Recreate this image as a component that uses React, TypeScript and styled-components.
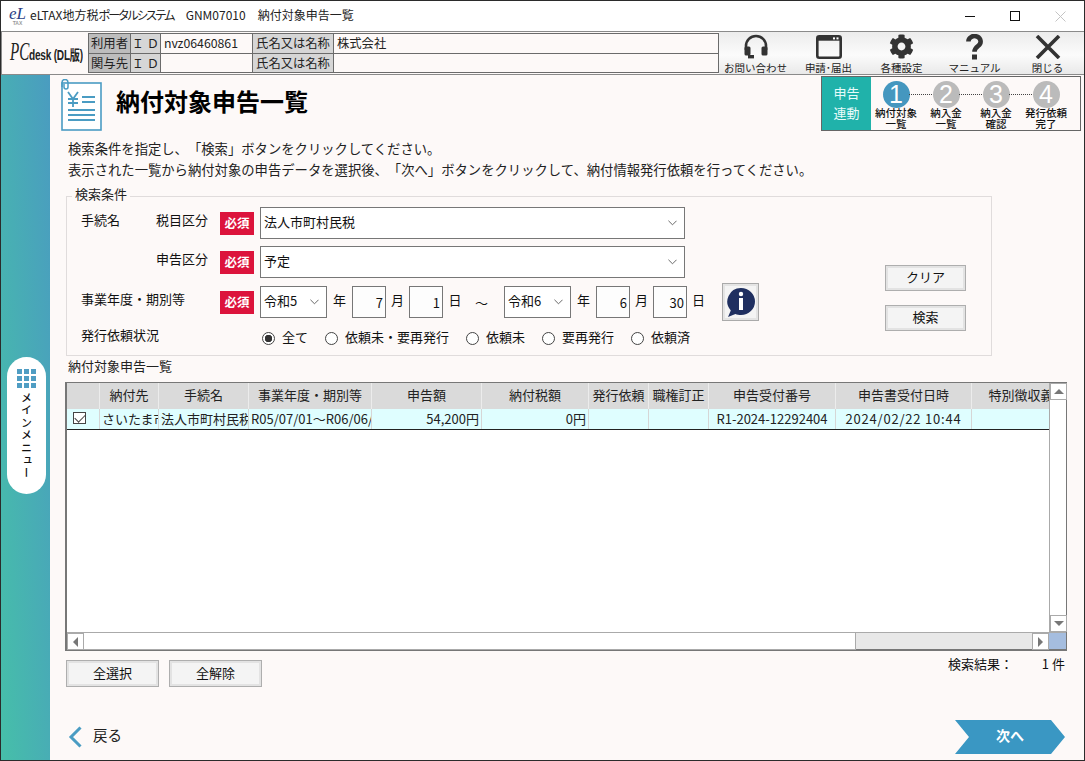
import React from 'react';
import styled, { createGlobalStyle } from 'styled-components';
import { FaCog } from 'react-icons/fa';

const columns = [
  { title: '', value: '', width: 33 },
  { title: '納付先', value: 'さいたま市', width: 59 },
  { title: '手続名', value: '法人市町村民税', width: 90 },
  { title: '事業年度・期別等', value: 'R05/07/01～R06/06/30', width: 123 },
  { title: '申告額', value: '54,200円', width: 110, align: 'right' },
  { title: '納付税額', value: '0円', width: 107, align: 'right' },
  { title: '発行依頼', value: '', width: 60 },
  { title: '職権訂正', value: '', width: 60 },
  { title: '申告受付番号', value: 'R1-2024-12292404', width: 127, align: 'center' },
  { title: '申告書受付日時', value: '2024/02/22 10:44', width: 136, align: 'center', wide: true },
  { title: '特別徴収義務者', value: '', width: 125 }
];

const steps = [
  { no: 1, lines: ['納付対象', '一覧'] },
  { no: 2, lines: ['納入金', '一覧'] },
  { no: 3, lines: ['納入金', '確認'] },
  { no: 4, lines: ['発行依頼', '完了'] }
];

const radios = ['全て', '依頼未・要再発行', '依頼未', '要再発行', '依頼済'];

const HeadsetIcon = () => (
  <svg width="26" height="25" viewBox="0 0 26 25">
    <path d="M3 16V12a10 10 0 0 1 20 0v4" fill="none" stroke="#333" strokeWidth="2.6" />
    <rect x="1.5" y="12.5" width="6" height="9" rx="1.5" fill="#333" />
    <rect x="18.5" y="12.5" width="6" height="9" rx="1.5" fill="#333" />
    <rect x="5" y="21" width="6" height="3.4" fill="#333" />
  </svg>
);

const WindowIcon = () => (
  <svg width="26" height="24" viewBox="0 0 26 24">
    <rect x="1.3" y="1.3" width="23.4" height="21.4" rx="2" fill="none" stroke="#333" strokeWidth="2.6" />
    <rect x="1.3" y="1.3" width="23.4" height="4.4" fill="#333" />
    <rect x="17" y="2.4" width="2" height="2" fill="#fff" />
    <rect x="20.5" y="2.4" width="2" height="2" fill="#fff" />
  </svg>
);

const HelpIcon = () => (
  <svg width="17" height="26" viewBox="0 0 17 26">
    <path d="M2.400 7.500a6.100 5.400 0 1 1 9.800 4.300c-2.500 1.800-3.700 2.800-3.700 6" fill="none" stroke="#333" strokeWidth="4.600" />
    <rect x="6" y="20.500" width="5" height="5" fill="#333" />
  </svg>
);

const CloseIcon = () => (
  <svg width="26" height="24" viewBox="0 0 26 24">
    <path d="M2 1l22 22M24 1L2 23" fill="none" stroke="#333" strokeWidth="3.6" />
  </svg>
);

const DocIcon = () => (
  <svg width="44" height="52" viewBox="0 0 44 52">
    <rect x="3" y="4" width="39" height="47" fill="#fff" stroke="#4a9cc3" strokeWidth="1.6" />
    <path d="M3 8V3.500a3 3 0 0 1 6 0V8a2 2 0 0 1-4 0V5" fill="none" stroke="#4a9cc3" strokeWidth="1.5" />
    <path d="M9 13l5 7 5-7M14 20v8M9 20h10M9 24h10" fill="none" stroke="#4a9cc3" strokeWidth="1.8" />
    <path d="M23 18h13M23 23h13M9 31h27M9 36h27M9 41h27" fill="none" stroke="#4a9cc3" strokeWidth="1.8" />
  </svg>
);

const InfoIcon = () => (
  <svg width="30" height="30" viewBox="0 0 30 30">
    <path d="M15 1a14 13.500 0 0 1 0 27c-2 0-4-.4-5.600-1.100L2 30l2.800-6.500A13.500 13.500 0 0 1 15 1z" fill="#1f2f60" />
    <circle cx="15" cy="7" r="2.200" fill="#fff" />
    <rect x="13" y="11" width="4" height="12" fill="#fff" />
  </svg>
);

const Chevron = () => (
  <svg width="9" height="6" viewBox="0 0 10 6">
    <path d="M.5.500L5 5 9.500.500" fill="none" stroke="#666" strokeWidth="1.100" />
  </svg>
);

const Required = () => <RequiredBadge>必須</RequiredBadge>;

const App: React.FC = () => {
  return (
    <Page>
      <GlobalStyle />
      <TitleBar>
        <TitleLogo>
          <LogoMark>eL</LogoMark>
          <LogoSub>TAX</LogoSub>
        </TitleLogo>
        <TitleText>eLTAX地方税<TitleKana>ポータルシステム</TitleKana></TitleText>
        <TitleText>GNM07010</TitleText>
        <TitleText>納付対象申告一覧</TitleText>
        <WindowControls>
          <MinButton />
          <MaxButton />
          <svg width="11" height="11" viewBox="0 0 11 11">
            <path d="M.5.500l10 10M10.500.500l-10 10" stroke="#c4c4c4" strokeWidth="1" />
          </svg>
        </WindowControls>
      </TitleBar>

      <HeaderBar>
        <ProductLogo>
          <ProductPc>PC</ProductPc>
          <ProductName>desk (DL版)</ProductName>
        </ProductLogo>
        <UserTable>
          <DarkCell>利用者</DarkCell>
          <LabelCell>Ｉ Ｄ</LabelCell>
          <ValueCell>nvz06460861</ValueCell>
          <LabelCell>氏名又は名称</LabelCell>
          <ValueCell>株式会社</ValueCell>
          <DarkCell>関与先</DarkCell>
          <LabelCell>Ｉ Ｄ</LabelCell>
          <ValueCell />
          <LabelCell>氏名又は名称</LabelCell>
          <ValueCell />
        </UserTable>
        <Toolbar>
          <ToolButton><ToolIcon><HeadsetIcon /></ToolIcon><ToolLabel>お問い合わせ</ToolLabel></ToolButton>
          <ToolButton><ToolIcon><WindowIcon /></ToolIcon><ToolLabel>申請･届出</ToolLabel></ToolButton>
          <ToolButton><ToolIcon><FaCog size={25} color="#333" /></ToolIcon><ToolLabel>各種設定</ToolLabel></ToolButton>
          <ToolButton><ToolIcon><HelpIcon /></ToolIcon><ToolLabel>マニュアル</ToolLabel></ToolButton>
          <ToolButton><ToolIcon><CloseIcon /></ToolIcon><ToolLabel>閉じる</ToolLabel></ToolButton>
        </Toolbar>
      </HeaderBar>

      <Body>
        <Sidebar>
          <MenuPill>
            <MenuGrid>
              {Array.from({ length: 9 }).map((_, i) => <MenuDot key={i} />)}
            </MenuGrid>
            <MenuText>メインメニュー</MenuText>
          </MenuPill>
        </Sidebar>

        <Main>
          <TitleRow>
            <DocIcon />
            <PageTitle>納付対象申告一覧</PageTitle>
            <Stepper>
              <StepperMode>申告<br />連動</StepperMode>
              {steps.map((step) => (
                <Step key={step.no} $last={step.no === 4}>
                  <StepCircle $active={step.no === 1}>{step.no}</StepCircle>
                  <StepLabel>{step.lines[0]}<br />{step.lines[1]}</StepLabel>
                </Step>
              ))}
            </Stepper>
          </TitleRow>

          <Instructions>
            <div>検索条件を指定し、「検索」ボタンをクリックしてください。</div>
            <div>表示された一覧から納付対象の申告データを選択後、「次へ」ボタンをクリックして、納付情報発行依頼を行ってください。</div>
          </Instructions>

          <SearchPanel>
            <Legend>検索条件</Legend>
            <SearchFields>
              <FieldRow>
                <GroupLabel>手続名</GroupLabel>
                <SubLabel>税目区分</SubLabel>
                <Required />
                <SelectBox $width={425}><SelectText>法人市町村民税</SelectText><Chevron /></SelectBox>
              </FieldRow>
              <FieldRow>
                <GroupLabel />
                <SubLabel>申告区分</SubLabel>
                <Required />
                <SelectBox $width={425}><SelectText>予定</SelectText><Chevron /></SelectBox>
              </FieldRow>
              <DateRow>
                <WideLabel>事業年度・期別等</WideLabel>
                <Required />
                <SelectBox $width={67}><SelectText>令和5</SelectText><Chevron /></SelectBox>
                <Unit $width={25}>年</Unit>
                <NumberBox>7</NumberBox>
                <Unit $width={23}>月</Unit>
                <NumberBox>1</NumberBox>
                <Unit $width={24}>日</Unit>
                <Tilde>～</Tilde>
                <SelectBox $width={67}><SelectText>令和6</SelectText><Chevron /></SelectBox>
                <Unit $width={25}>年</Unit>
                <NumberBox>6</NumberBox>
                <Unit $width={23}>月</Unit>
                <NumberBox>30</NumberBox>
                <Unit $width={23}>日</Unit>
                <InfoButton><InfoIcon /></InfoButton>
              </DateRow>
              <RadioRow>
                <RadioTitle>発行依頼状況</RadioTitle>
                {radios.map((radio, i) => (
                  <RadioItem key={radio}>
                    <RadioMark $checked={i === 0} />
                    <RadioText>{radio}</RadioText>
                  </RadioItem>
                ))}
              </RadioRow>
            </SearchFields>
            <SearchActions>
              <ActionButton $width={81} $height={26}>クリア</ActionButton>
              <ActionButton $width={81} $height={26}>検索</ActionButton>
            </SearchActions>
          </SearchPanel>

          <SectionLabel>納付対象申告一覧</SectionLabel>

          <GridFrame>
            <GridTop>
              <GridBody>
                <GridHeader>
                  {columns.map((col, i) => (
                    <HeaderCell key={i} $width={col.width}>{col.title}</HeaderCell>
                  ))}
                </GridHeader>
                <GridRow>
                  {columns.map((col, i) => (
                    <DataCell key={i} $width={col.width} $align={col.align} $wide={col.wide}>
                      {i === 0 ? <CheckMark /> : col.value}
                    </DataCell>
                  ))}
                </GridRow>
              </GridBody>
              <VScroll>
                <ScrollButton><ArrowUp /></ScrollButton>
                <VThumb />
                <ScrollButton><ArrowDown /></ScrollButton>
              </VScroll>
            </GridTop>
            <HScroll>
              <ScrollButton><ArrowLeft /></ScrollButton>
              <HThumb />
              <HTrack />
              <ScrollButton><ArrowRight /></ScrollButton>
              <ScrollCorner />
            </HScroll>
          </GridFrame>

          <BelowGrid>
            <ActionButton $width={93} $height={27}>全選択</ActionButton>
            <ActionButton $width={93} $height={27}>全解除</ActionButton>
            <ResultCount>
              <span>検索結果：</span>
              <span>1 件</span>
            </ResultCount>
          </BelowGrid>

          <Footer>
            <BackLink>
              <svg width="14" height="22" viewBox="0 0 14 22">
                <path d="M12.500 1.500L3 11l9.500 9.500" fill="none" stroke="#4a9cc3" strokeWidth="3" />
              </svg>
              <BackText>戻る</BackText>
            </BackLink>
            <NextButton>次へ</NextButton>
          </Footer>
        </Main>
      </Body>
    </Page>
  );
};

export default App;

const GlobalStyle = createGlobalStyle`
  * {
    box-sizing: border-box;
  }
  body {
    margin: 0;
    font-family: "Noto Sans CJK JP", "Liberation Sans", sans-serif;
    font-size: 13px;
    color: #111;
    text-spacing-trim: space-all;
  }
`;

const Page = styled.div`
  width: 1085px;
  height: 761px;
  border: 1px solid #2b2b2b;
  background: #fff;
  overflow: hidden;
  display: flex;
  flex-direction: column;
`;

const TitleBar = styled.div`
  height: 30px;
  display: flex;
  align-items: center;
  padding-left: 8px;
  font-size: 12px;
  flex-shrink: 0;
`;

const TitleLogo = styled.div`
  width: 21px;
  padding-right: 4px;
  display: flex;
  flex-direction: column;
  align-items: center;
  line-height: 1;
`;

const LogoMark = styled.span`
  font-family: "Liberation Serif", serif;
  font-style: italic;
  font-size: 17px;
  line-height: 14px;
  color: #2c3f86;
`;

const LogoSub = styled.span`
  font-family: "Liberation Sans", sans-serif;
  font-size: 5px;
  font-weight: bold;
  color: #999;
`;

const TitleText = styled.span`
  margin: 0 12px 4px 0;
  color: #222;
  font-feature-settings: "palt";
`;

const TitleKana = styled.span`
  letter-spacing: -1.7px;
`;

const WindowControls = styled.div`
  margin-left: auto;
  width: 101px;
  margin-right: 18px;
  display: flex;
  align-items: center;
  justify-content: space-between;
`;

const MinButton = styled.div`
  width: 10px;
  height: 1px;
  background: #111;
`;

const MaxButton = styled.div`
  width: 10px;
  height: 10px;
  border: 1px solid #111;
`;

const HeaderBar = styled.div`
  height: 44px;
  flex-shrink: 0;
  display: flex;
  border-top: 1px solid #8a8a8a;
  border-bottom: 1px solid #8a8a8a;
  border-left: 1px solid #8a8a8a;
  background: #fdf9f8;
`;

const ProductLogo = styled.div`
  width: 86px;
  display: flex;
  align-items: baseline;
  padding: 6px 0 0 8px;
  color: #222;
`;

const ProductPc = styled.span`
  display: inline-block;
  width: 19px;
  font-family: "Liberation Serif", serif;
  font-style: italic;
  font-size: 26px;
  line-height: 28px;
  transform: scaleX(0.58);
  transform-origin: left;
`;

const ProductName = styled.span`
  display: inline-block;
  font-family: "Liberation Sans", "Noto Sans CJK JP", sans-serif;
  font-size: 14px;
  font-weight: bold;
  letter-spacing: -0.3px;
  white-space: nowrap;
  transform: scaleX(0.72);
  transform-origin: left;
`;

const UserTable = styled.div`
  width: 631px;
  height: 40px;
  margin-top: 1px;
  display: grid;
  grid-template-columns: 41px 29px 91px 80px 1fr;
  grid-template-rows: 19px 18px;
  gap: 1px;
  padding: 1px 0 1px 1px;
  background: #6b6b6b;
  border-right: 1px solid #6b6b6b;
`;

const BaseCell = styled.div`
  font-size: 12.3px;
  line-height: 18px;
  white-space: nowrap;
  overflow: hidden;
  color: #222;
`;

const DarkCell = styled(BaseCell)`
  background: #bdbdbd;
  text-align: center;
`;

const LabelCell = styled(BaseCell)`
  background: #d6d6d6;
  text-align: center;
`;

const ValueCell = styled(BaseCell)`
  background: #fdf9f8;
  padding-left: 3px;
`;

const Toolbar = styled.div`
  flex: 1;
  display: flex;
  background: linear-gradient(#ececec, #fbfbfb 55%, #e9e9e9);
`;

const ToolButton = styled.div`
  width: 73px;
  display: flex;
  flex-direction: column;
  align-items: center;
`;

const ToolIcon = styled.div`
  height: 29px;
  display: flex;
  align-items: center;
  justify-content: center;
`;

const ToolLabel = styled.span`
  font-size: 10.5px;
  line-height: 13px;
  white-space: nowrap;
  color: #222;
`;

const Body = styled.div`
  flex: 1;
  min-height: 0;
  display: flex;
`;

const Sidebar = styled.div`
  width: 49px;
  flex-shrink: 0;
  background: linear-gradient(to bottom left, #4a9cc0, #46bfa9);
  padding: 282px 0 0 6px;
`;

const MenuPill = styled.div`
  width: 39px;
  height: 137px;
  border-radius: 20px;
  background: #fff;
  display: flex;
  flex-direction: column;
  align-items: center;
  padding-top: 12px;
`;

const MenuGrid = styled.div`
  display: grid;
  grid-template-columns: repeat(3, 5px);
  grid-auto-rows: 5px;
  gap: 2px;
`;

const MenuDot = styled.span`
  background: #4f9dc3;
`;

const MenuText = styled.div`
  writing-mode: vertical-rl;
  font-size: 11px;
  font-weight: 500;
  letter-spacing: 1.6px;
  margin-top: 4px;
  color: #111;
`;

const Main = styled.div`
  flex: 1;
  min-width: 0;
  background: #fdf9f8;
  padding: 0 17px 0 16px;
  display: flex;
  flex-direction: column;
`;

const TitleRow = styled.div`
  height: 63px;
  flex-shrink: 0;
  display: flex;
  align-items: flex-start;
  margin: 0 -14px 0 -7px;
  padding-top: 1px;
  svg {
    margin-top: 3px;
  }
`;

const PageTitle = styled.h1`
  margin: 8px 0 0 13px;
  font-size: 24px;
  line-height: 34px;
  font-weight: 700;
  color: #000;
`;

const Stepper = styled.div`
  margin-left: auto;
  width: 260px;
  height: 55px;
  border: 1px solid #666;
  display: flex;
  background: #fdf9f8;
`;

const StepperMode = styled.div`
  width: 49px;
  background: #20b2aa;
  color: #e8fbfa;
  font-size: 13px;
  line-height: 20px;
  text-align: center;
  padding-top: 6px;
`;

const Step = styled.div<{ $last?: boolean }>`
  width: 50px;
  position: relative;
  display: flex;
  flex-direction: column;
  align-items: center;
  padding-top: 4px;
  &::after {
    content: '';
    display: ${(p) => (p.$last ? 'none' : 'block')};
    position: absolute;
    top: 17px;
    left: 38px;
    width: 25px;
    border-top: 1px dotted #444;
  }
`;

const StepCircle = styled.div<{ $active?: boolean }>`
  width: 27px;
  height: 27px;
  border-radius: 50%;
  background: ${(p) => (p.$active ? '#4597bf' : '#bbbbbb')};
  color: #fff;
  font-family: "Liberation Sans", sans-serif;
  font-size: 25px;
  line-height: 27px;
  text-align: center;
`;

const StepLabel = styled.div`
  font-size: 10.5px;
  line-height: 11px;
  font-weight: 500;
  text-align: center;
  white-space: nowrap;
  margin-top: -1px;
`;

const Instructions = styled.div`
  height: 44px;
  flex-shrink: 0;
  padding-left: 2px;
  line-height: 21px;
  font-size: 13.33px;
  white-space: nowrap;
  color: #222;
`;

const SearchPanel = styled.div`
  position: relative;
  width: 926px;
  height: 160px;
  flex-shrink: 0;
  margin-top: 14px;
  border: 1px solid #e0dcdc;
  padding: 10px 25px 0 14px;
  display: flex;
`;

const Legend = styled.span`
  position: absolute;
  top: -11px;
  left: 5px;
  padding: 0 3px;
  background: #fdf9f8;
  font-size: 13px;
  line-height: 16px;
  color: #222;
`;

const SearchFields = styled.div`
  display: flex;
  flex-direction: column;
  flex: 1;
`;

const FieldRow = styled.div`
  height: 32px;
  margin-bottom: 7px;
  display: flex;
  align-items: center;
  white-space: nowrap;
`;

const DateRow = styled(FieldRow)`
  margin: 1px 0 0;
`;

const GroupLabel = styled.span`
  width: 75px;
  margin-bottom: 7px;
`;

const SubLabel = styled.span`
  width: 64px;
  margin-bottom: 7px;
`;

const WideLabel = styled.span`
  width: 139px;
  margin-bottom: 7px;
`;

const RequiredBadge = styled.span`
  width: 34px;
  height: 23px;
  margin-right: 6px;
  background: #dc143c;
  color: #fff;
  font-size: 12.5px;
  font-weight: 700;
  line-height: 21px;
  text-align: center;
  flex-shrink: 0;
`;

const SelectBox = styled.div<{ $width: number }>`
  width: ${(p) => p.$width}px;
  height: 32px;
  background: #fff;
  border: 1px solid #777;
  padding: 0 7px 0 3px;
  display: flex;
  align-items: center;
  justify-content: space-between;
  font-size: 13px;
`;

const SelectText = styled.span`
  margin-bottom: 4px;
`;

const Unit = styled.span<{ $width: number }>`
  width: ${(p) => p.$width}px;
  margin-bottom: 6px;
  text-align: center;
  font-size: 13px;
`;

const NumberBox = styled.div`
  width: 34px;
  height: 32px;
  background: #fdfdfd;
  border: 1px solid #777;
  padding-right: 2px;
  text-align: right;
  line-height: 31px;
  font-size: 13px;
`;

const Tilde = styled.span`
  width: 37px;
  padding-right: 8px;
  text-align: center;
`;

const InfoButton = styled.div`
  width: 37px;
  height: 38px;
  margin-left: 12px;
  border: 1px solid #aaa;
  box-shadow: inset 0 0 0 2px #e4e4e4;
  background: #f4f4f4;
  display: flex;
  align-items: center;
  justify-content: center;
`;

const RadioRow = styled.div`
  display: flex;
  align-items: center;
  margin-top: 10px;
  height: 20px;
  white-space: nowrap;
`;

const RadioTitle = styled.span`
  width: 181px;
  margin-bottom: 7px;
`;

const RadioItem = styled.label`
  display: flex;
  align-items: center;
  gap: 7px;
  margin-right: 17px;
`;

const RadioText = styled.span`
  margin-bottom: 4px;
`;

const RadioMark = styled.span<{ $checked?: boolean }>`
  width: 13px;
  height: 13px;
  border-radius: 50%;
  border: 1px solid #444;
  background: ${(p) => (p.$checked ? 'radial-gradient(circle, #333 0 3.500px, #fff 4px)' : '#fff')};
`;

const SearchActions = styled.div`
  display: flex;
  flex-direction: column;
  gap: 14px;
  padding-top: 58px;
`;

const ActionButton = styled.div<{ $width: number; $height: number }>`
  width: ${(p) => p.$width}px;
  height: ${(p) => p.$height}px;
  border: 1px solid #aeaeae;
  box-shadow: inset 0 0 0 2px #e3e3e3;
  background: #f4f4f4;
  text-align: center;
  line-height: ${(p) => p.$height - 4}px;
  font-size: 13px;
  color: #111;
`;

const SectionLabel = styled.div`
  margin: 2px 0 0 2px;
  height: 16px;
  line-height: 16px;
  flex-shrink: 0;
  color: #222;
`;

const GridFrame = styled.div`
  width: 1002px;
  height: 269px;
  margin: 8px 0 0 -1px;
  flex-shrink: 0;
  border: solid #777;
  border-width: 1px 1px 2px 2px;
  background: #fff;
  display: flex;
  flex-direction: column;
`;

const GridTop = styled.div`
  flex: 1;
  min-height: 0;
  display: flex;
`;

const GridBody = styled.div`
  flex: 1;
  min-width: 0;
  overflow: hidden;
`;

const GridHeader = styled.div`
  display: flex;
  height: 26px;
  background: #dadada;
`;

const GridRow = styled.div`
  display: flex;
  height: 21px;
  background: #dffeff;
  border-bottom: 1px solid #222;
`;

const HeaderCell = styled.div<{ $width: number }>`
  width: ${(p) => p.$width}px;
  flex-shrink: 0;
  border-right: 1px solid #ececec;
  text-align: center;
  line-height: 24px;
  font-size: 13px;
  white-space: nowrap;
  overflow: hidden;
  color: #222;
`;

const DataCell = styled.div<{ $width: number; $align?: string; $wide?: boolean }>`
  width: ${(p) => p.$width}px;
  flex-shrink: 0;
  border-right: 1px solid #d6d6d6;
  text-align: ${(p) => p.$align || 'left'};
  padding: 0 2px;
  line-height: 20px;
  font-size: 13px;
  letter-spacing: ${(p) => (p.$wide ? '0.8px' : '0')};
  white-space: nowrap;
  overflow: hidden;
  color: #222;
`;

const CheckMark = styled.span`
  display: block;
  position: relative;
  width: 13px;
  height: 12px;
  margin: 3px 0 0 4px;
  border: 1px solid #444;
  background: #fff;
  &::after {
    content: '';
    position: absolute;
    left: 3px;
    top: -1px;
    width: 5px;
    height: 9px;
    border: solid #444;
    border-width: 0 1px 1px 0;
    transform: rotate(45deg);
  }
`;

const VScroll = styled.div`
  width: 17px;
  flex-shrink: 0;
  background: #fff;
  display: flex;
  flex-direction: column;
  border-left: 1px solid #aaa;
`;

const ScrollButton = styled.div`
  width: 17px;
  height: 17px;
  flex-shrink: 0;
  background: #fff;
  border: 1px solid #aaa;
  display: flex;
  align-items: center;
  justify-content: center;
`;

const VThumb = styled.div`
  flex: 1;
  background: #fff;
`;

const HScroll = styled.div`
  height: 17px;
  flex-shrink: 0;
  display: flex;
  border-top: 1px solid #aaa;
  background: #e8e8e8;
`;

const HThumb = styled.div`
  width: 772px;
  height: 17px;
  background: #fff;
  border: 1px solid #aaa;
  border-width: 0 1px 1px 0;
`;

const HTrack = styled.div`
  flex: 1;
`;

const ScrollCorner = styled.div`
  width: 17px;
  background: #a5bddf;
`;

const ArrowUp = styled.span`
  border: solid transparent;
  border-width: 0 5px 5px;
  border-bottom-color: #777;
`;

const ArrowDown = styled.span`
  border: solid transparent;
  border-width: 5px 5px 0;
  border-top-color: #777;
`;

const ArrowLeft = styled.span`
  border: solid transparent;
  border-width: 5px 5px 5px 0;
  border-right-color: #777;
`;

const ArrowRight = styled.span`
  border: solid transparent;
  border-width: 5px 0 5px 5px;
  border-left-color: #777;
`;

const BelowGrid = styled.div`
  margin-top: 9px;
  height: 27px;
  flex-shrink: 0;
  display: flex;
  gap: 10px;
`;

const ResultCount = styled.div`
  margin: -4px 2px 0 auto;
  width: 117px;
  height: 16px;
  display: flex;
  justify-content: space-between;
  line-height: 16px;
  font-size: 13px;
  white-space: nowrap;
`;

const Footer = styled.div`
  margin-top: 33px;
  height: 34px;
  flex-shrink: 0;
  display: flex;
  align-items: center;
  justify-content: space-between;
`;

const BackLink = styled.div`
  display: flex;
  align-items: center;
  gap: 11px;
  margin-left: 2px;
  font-size: 14.5px;
  color: #222;
`;

const BackText = styled.span`
  margin-bottom: 6px;
`;

const NextButton = styled.div`
  width: 110px;
  height: 34px;
  margin-right: 2px;
  background: #3a97c3;
  color: #fff;
  font-size: 14px;
  font-weight: 700;
  line-height: 30px;
  text-align: center;
  clip-path: polygon(0 0, 96px 0, 110px 17px, 96px 34px, 0 34px, 14px 17px);
`;
